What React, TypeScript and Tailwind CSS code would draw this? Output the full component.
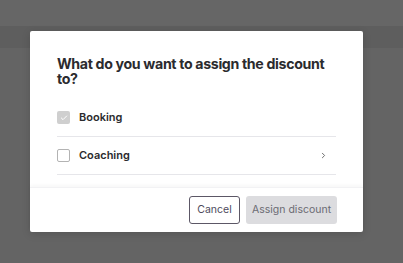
import { ChevronRight, Check } from "lucide-react";

const options = [
  { label: "Booking", checked: true, chevron: false },
  { label: "Coaching", checked: false, chevron: true },
];

export default function App() {
  return (
    <div className="relative h-[263px] w-[403px] overflow-hidden bg-[#646464] font-['Inter',sans-serif]">
      <div className="h-[26px] bg-[#666666]" />
      <div className="h-[22px] bg-[#5e5e5e]" />

      <div className="absolute left-[30px] top-[31px] flex w-[333px] flex-col rounded-[2px] bg-white shadow-[0_2px_8px_rgba(0,0,0,0.15)]">
        <div className="px-[27px] pt-[25px]">
          <h2 className="text-[14.2px] font-bold leading-[15px] tracking-[-0.35px] text-[#2b2b2e]">
            What do you want to assign the discount to?
          </h2>
          <ul className="mt-[13px] flex flex-col">
            {options.map((o) => (
              <li
                key={o.label}
                className="flex h-[38px] items-center gap-[9px] border-b border-[#e6e6ea]"
              >
                <span
                  className={
                    o.checked
                      ? "flex h-[13px] w-[13px] items-center justify-center rounded-[2px] bg-[#cfcfcf]"
                      : "h-[13px] w-[13px] rounded-[2px] border border-[#b3b3b3] bg-white"
                  }
                >
                  {o.checked && (
                    <Check className="h-[8px] w-[8px] text-white" strokeWidth={3} />
                  )}
                </span>
                <span className="flex-1 text-[11px] font-semibold text-[#2b2b2e]">
                  {o.label}
                </span>
                {o.chevron && (
                  <ChevronRight className="mr-[8px] h-[9px] w-[9px] text-[#666]" strokeWidth={2.5} />
                )}
              </li>
            ))}
          </ul>
        </div>

        <div className="mt-[12px] flex justify-end gap-[6px] border-t border-[#f2f2f4] px-[26px] pb-[8px] pt-[8px] shadow-[0_-2px_3px_rgba(0,0,0,0.03)]">
          <button className="h-[28px] w-[51px] rounded-[3px] border border-[#5c5766] bg-white text-[10.5px] text-[#4d4a5c]">
            Cancel
          </button>
          <button className="h-[28px] w-[91px] rounded-[3px] bg-[#dcdcdf] text-[10.5px] text-[#6b6b73]">
            Assign discount
          </button>
        </div>
      </div>
    </div>
  );
}
